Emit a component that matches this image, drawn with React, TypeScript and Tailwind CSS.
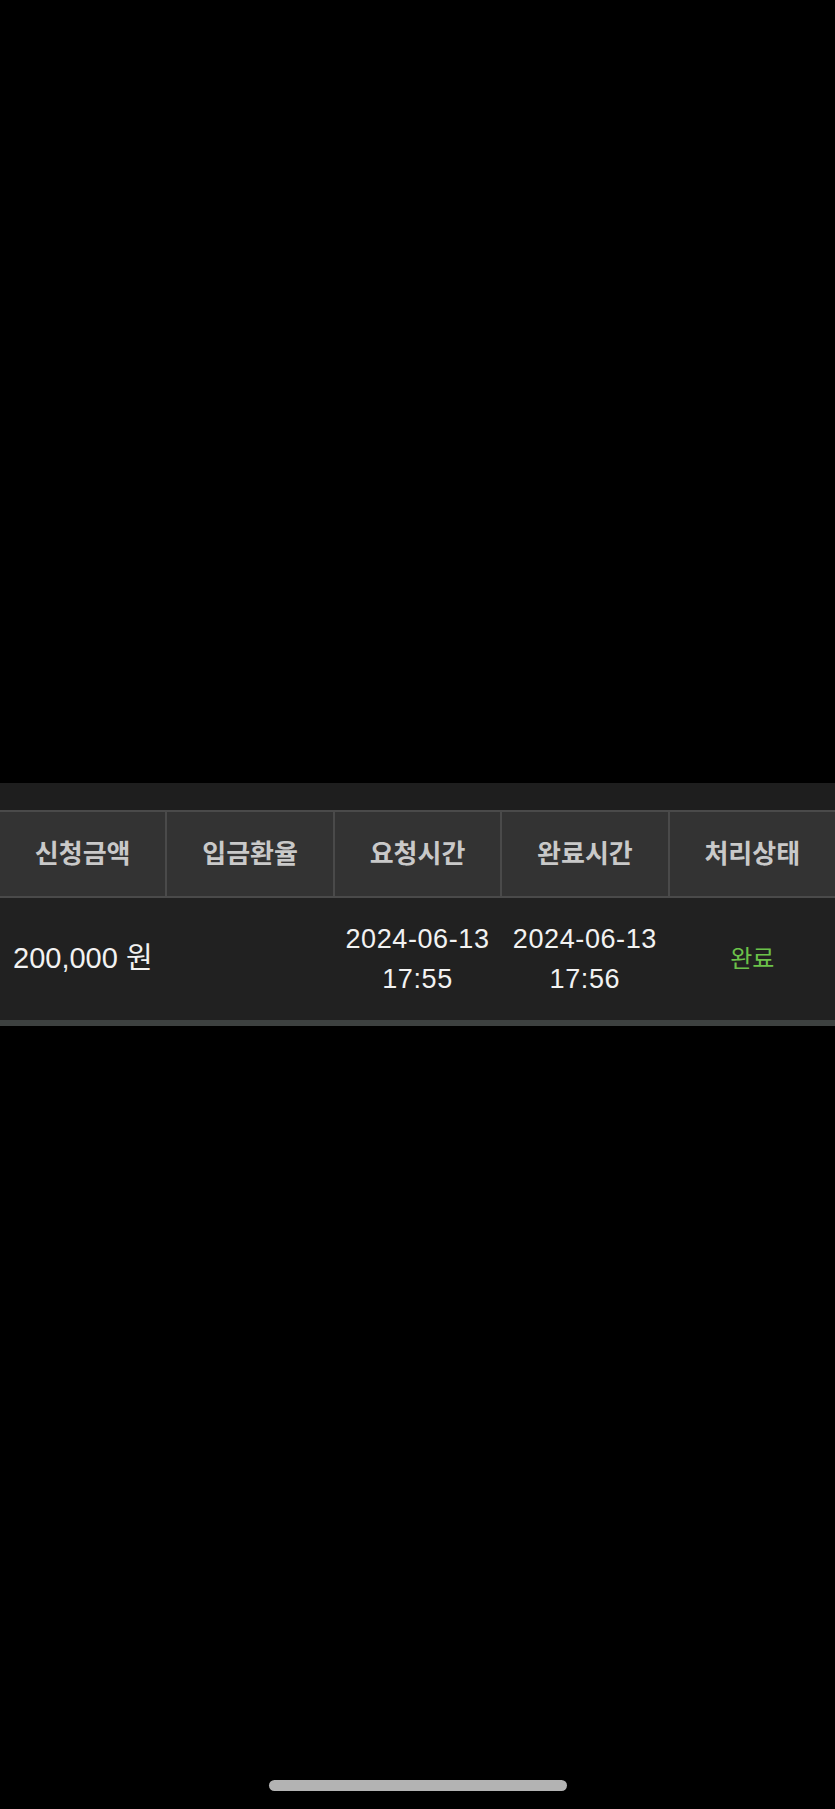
const headers = ["신청금액", "입금환율", "요청시간", "완료시간", "처리상태"];

const row = {
  amount: "200,000 원",
  rate: "",
  requested: ["2024-06-13", "17:55"],
  completed: ["2024-06-13", "17:56"],
  status: "완료",
};

const font = "font-['Liberation_Sans','Noto_Sans_CJK_KR',sans-serif]";

export default function App() {
  return (
    <div className={`h-[1809px] w-full bg-black flex flex-col ${font}`}>
      <div className="h-[783px]" />

      <div className="bg-[#1e1e1e] pt-[27px]">
        {/* header */}
        <div className="grid grid-cols-5 gap-[2px] bg-[#4a4a4a] py-[2px]">
          {headers.map((h) => (
            <div
              key={h}
              className="h-[84px] bg-[#333333] flex items-center justify-center text-[26px] font-bold text-[#c9c9c9]"
            >
              {h}
            </div>
          ))}
        </div>

        {/* body */}
        <div className="grid grid-cols-5 gap-[2px] h-[128px] bg-[#212121] border-b-[6px] border-[#3d4140]">
          <div className="flex items-center pl-[13px] text-[29px] text-[#f2f2f2] whitespace-nowrap">
            {row.amount}
          </div>
          <div className="flex items-center justify-center text-[26px] text-[#f2f2f2]">
            {row.rate}
          </div>
          <div className="flex flex-col items-center justify-center text-[27px] leading-[40px] text-[#f2f2f2] tracking-[0.6px]">
            <span>{row.requested[0]}</span>
            <span>{row.requested[1]}</span>
          </div>
          <div className="flex flex-col items-center justify-center text-[27px] leading-[40px] text-[#f2f2f2] tracking-[0.6px]">
            <span>{row.completed[0]}</span>
            <span>{row.completed[1]}</span>
          </div>
          <div className="flex items-center justify-center text-[24px] text-[#6cc24a]">
            {row.status}
          </div>
        </div>
      </div>

      <div className="flex-1" />

      <div className="flex justify-center pb-[18px]">
        <div className="w-[298px] h-[11px] rounded-full bg-[#b3b3b3]" />
      </div>
    </div>
  );
}
